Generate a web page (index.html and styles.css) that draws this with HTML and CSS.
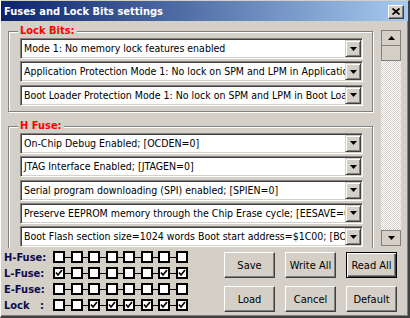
FILE: index.html
```html
<!DOCTYPE html>
<html lang="en">
<head>
  <meta charset="UTF-8">
  <title>Fuses and Lock Bits settings</title>
  <link rel="stylesheet" href="styles.css">
</head>
<body>

  <div id="fuseWindow">
    <div class="titlebar">
      <span class="title">Fuses and Lock Bits settings</span>
      <button class="close-btn">
        <svg width="8" height="7" viewBox="0 0 8 7"><path d="M0.5 0.5L7.5 6.5M7.5 0.5L0.5 6.5" stroke="#000" stroke-width="1.7"/></svg>
      </button>
    </div>

    <div class="main">
      <div class="viewport">
        <div class="group">
          <div class="group-label">Lock Bits:</div>
          <div class="combo"><span class="combo-text">Mode 1: No memory lock features enabled</span><span class="drop"><svg width="7" height="4"><path d="M0 0H7L3.5 4Z"/></svg></span></div>
          <div class="combo"><span class="combo-text">Application Protection Mode 1: No lock on SPM and LPM in Application Section</span><span class="drop"><svg width="7" height="4"><path d="M0 0H7L3.5 4Z"/></svg></span></div>
          <div class="combo"><span class="combo-text">Boot Loader Protection Mode 1: No lock on SPM and LPM in Boot Loader Section</span><span class="drop"><svg width="7" height="4"><path d="M0 0H7L3.5 4Z"/></svg></span></div>
        </div>

        <div class="group">
          <div class="group-label">H Fuse:</div>
          <div class="combo"><span class="combo-text">On-Chip Debug Enabled; [OCDEN=0]</span><span class="drop"><svg width="7" height="4"><path d="M0 0H7L3.5 4Z"/></svg></span></div>
          <div class="combo"><span class="combo-text">JTAG Interface Enabled; [JTAGEN=0]</span><span class="drop"><svg width="7" height="4"><path d="M0 0H7L3.5 4Z"/></svg></span></div>
          <div class="combo"><span class="combo-text">Serial program downloading (SPI) enabled; [SPIEN=0]</span><span class="drop"><svg width="7" height="4"><path d="M0 0H7L3.5 4Z"/></svg></span></div>
          <div class="combo"><span class="combo-text">Preserve EEPROM memory through the Chip Erase cycle; [EESAVE=0]</span><span class="drop"><svg width="7" height="4"><path d="M0 0H7L3.5 4Z"/></svg></span></div>
          <div class="combo"><span class="combo-text">Boot Flash section size=1024 words Boot start address=$1C00; [BOOTSZ=00]</span><span class="drop"><svg width="7" height="4"><path d="M0 0H7L3.5 4Z"/></svg></span></div>
        </div>
      </div>

      <div class="scrollbar">
        <div class="sb-btn"><svg width="7" height="4"><path d="M3.5 0L7 4H0Z"/></svg></div>
        <div class="sb-thumb"></div>
        <div class="sb-track"></div>
        <div class="sb-btn"><svg width="7" height="4"><path d="M0 0H7L3.5 4Z"/></svg></div>
      </div>
    </div>

    <div class="footer">
      <div class="bits">
        <div class="bit-row">
          <span class="bit-label">H-Fuse:</span>
          <span class="box"></span><i></i><span class="box"></span><i></i><span class="box"></span><i></i><span class="box"></span><i></i><span class="box"></span><i></i><span class="box"></span><i></i><span class="box"></span><i></i><span class="box"></span>
        </div>
        <div class="bit-row">
          <span class="bit-label">L-Fuse:</span>
          <span class="box on"><svg width="8" height="8"><path d="M1 3.5L3 6L7 1"/></svg></span><i></i><span class="box"></span><i></i><span class="box"></span><i></i><span class="box"></span><i></i><span class="box"></span><i></i><span class="box"></span><i></i><span class="box on"><svg width="8" height="8"><path d="M1 3.5L3 6L7 1"/></svg></span><i></i><span class="box on"><svg width="8" height="8"><path d="M1 3.5L3 6L7 1"/></svg></span>
        </div>
        <div class="bit-row">
          <span class="bit-label">E-Fuse:</span>
          <span class="box"></span><i></i><span class="box"></span><i></i><span class="box"></span><i></i><span class="box"></span><i></i><span class="box"></span><i></i><span class="box"></span><i></i><span class="box"></span><i></i><span class="box"></span>
        </div>
        <div class="bit-row">
          <span class="bit-label">Lock   :</span>
          <span class="box"></span><i></i><span class="box"></span><i></i><span class="box on"><svg width="8" height="8"><path d="M1 3.5L3 6L7 1"/></svg></span><i></i><span class="box on"><svg width="8" height="8"><path d="M1 3.5L3 6L7 1"/></svg></span><i></i><span class="box on"><svg width="8" height="8"><path d="M1 3.5L3 6L7 1"/></svg></span><i></i><span class="box on"><svg width="8" height="8"><path d="M1 3.5L3 6L7 1"/></svg></span><i></i><span class="box on"><svg width="8" height="8"><path d="M1 3.5L3 6L7 1"/></svg></span><i></i><span class="box on"><svg width="8" height="8"><path d="M1 3.5L3 6L7 1"/></svg></span>
        </div>
      </div>

      <div class="buttons">
        <button class="btn">Save</button>
        <button class="btn">Write All</button>
        <button class="btn default">Read All</button>
        <button class="btn">Load</button>
        <button class="btn">Cancel</button>
        <button class="btn">Default</button>
      </div>
    </div>
  </div>

</body>
</html>
```

FILE: styles.css
```css
body {
  margin: 0;
  background: #D4D0C8;
  font-family: "DejaVu Sans Condensed", "Liberation Sans", sans-serif;
  font-size: 11px;
}

#fuseWindow {
  width: 410px;
  height: 318px;
  box-sizing: border-box;
  background: #D4D0C8;
  border-top: 1px solid #D4D0C8;
  border-left: 1px solid #fff;
  border-right: 2px solid #404040;
  border-bottom: 2px solid #404040;
  box-shadow: inset -1px -1px 0 #808080;
  display: flex;
  flex-direction: column;
}

/* title bar */
.titlebar {
  height: 20px;
  flex: none;
  display: flex;
  align-items: center;
  justify-content: space-between;
  padding: 0 4px 0 3px;
  background: linear-gradient(to right, #0A246A, #A6CAF0);
}

.title {
  color: #fff;
  font-weight: bold;
  font-size: 11px;
}

.close-btn {
  width: 16px;
  height: 14px;
  padding: 0;
  margin-top: 1px;
  background: #D4D0C8;
  border: 1px solid;
  border-color: #fff #404040 #404040 #fff;
  box-shadow: inset -1px -1px 0 #808080;
  display: flex;
  justify-content: center;
  align-items: center;
}

/* scrolling area */
.main {
  height: 227px;
  flex: none;
  display: flex;
}

.viewport {
  flex: 1;
  overflow: hidden;
  padding: 10px 0 0 7px;
}

.group {
  width: 365px;
  box-sizing: border-box;
  border: 1px solid #808080;
  box-shadow: inset 1px 1px 0 #fff, 1px 1px 0 #fff;
  padding: 0 9px 5px 11px;
  display: flex;
  flex-direction: column;
  gap: 2.4px;
  margin-bottom: 14px;
}

.group-label {
  width: fit-content;
  height: 14px;
  line-height: 14px;
  margin: -8px 0 -2.4px -2px;
  padding: 0 2px;
  background: #D4D0C8;
  color: #f00;
  font-weight: bold;
}

.combo {
  height: 21px;
  flex: none;
  box-sizing: border-box;
  background: #fff;
  border: 1px solid;
  border-color: #808080 #fff #fff #808080;
  box-shadow: inset 1px 1px 0 #404040, inset -1px -1px 0 #D4D0C8;
  padding: 1px;
  display: flex;
  align-items: stretch;
}

.combo-text {
  flex: 1;
  overflow: hidden;
  white-space: nowrap;
  font-size: 10.5px;
  line-height: 17px;
  padding-left: 2px;
  color: #000;
}

.drop {
  width: 16px;
  flex: none;
  box-sizing: border-box;
  background: #D4D0C8;
  border: 1px solid;
  border-color: #D4D0C8 #404040 #404040 #D4D0C8;
  box-shadow: inset 1px 1px 0 #fff, inset -1px -1px 0 #808080;
  display: flex;
  justify-content: center;
  align-items: center;
}

/* scrollbar */
.scrollbar {
  width: 20px;
  flex: none;
  margin: 9px 7px 2px 3px;
  display: flex;
  flex-direction: column;
}

.sb-btn,
.sb-thumb {
  height: 16px;
  flex: none;
  box-sizing: border-box;
  border: 1px solid #808080;
  background: #D4D0C8;
  display: flex;
  justify-content: center;
  align-items: center;
}

.sb-thumb {
  height: 15px;
  border-top: none;
}

.sb-track {
  flex: 1;
  background: repeating-conic-gradient(#fff 0 25%, #D4D0C8 0 50%) 0 0 / 2px 2px;
}

/* footer */
.footer {
  flex: 1;
  display: flex;
  justify-content: space-between;
}

.bits {
  padding: 1px 0 0 3px;
}

.bit-row {
  height: 16px;
  display: flex;
  align-items: center;
}

.bit-label {
  width: 49px;
  white-space: pre;
  font-weight: bold;
  color: #0c0c4c;
}

.box {
  width: 12px;
  height: 12px;
  box-sizing: border-box;
  border: 2px solid #000;
  background: #fff;
  display: flex;
  justify-content: center;
  align-items: center;
}

.box svg path {
  fill: none;
  stroke: #000;
  stroke-width: 1.7;
}

.bit-row i {
  width: 5.5px;
  height: 1px;
  background: #000;
}

.buttons {
  margin: 4px 11px 0 0;
  display: grid;
  grid-template-columns: repeat(3, 51px);
  grid-template-rows: repeat(2, 26px);
  column-gap: 10px;
  row-gap: 8px;
}

.btn {
  font-family: "DejaVu Sans Condensed", "Liberation Sans", sans-serif;
  font-size: 11px;
  color: #000;
  padding: 0;
  background: #D4D0C8;
  border: 1px solid;
  border-color: #fff #404040 #404040 #fff;
  box-shadow: inset -1px -1px 0 #808080;
}

.btn.default {
  border-color: #000;
  box-shadow: inset 1px 1px 0 #fff, inset -1px -1px 0 #404040, inset -2px -2px 0 #808080;
}
```
